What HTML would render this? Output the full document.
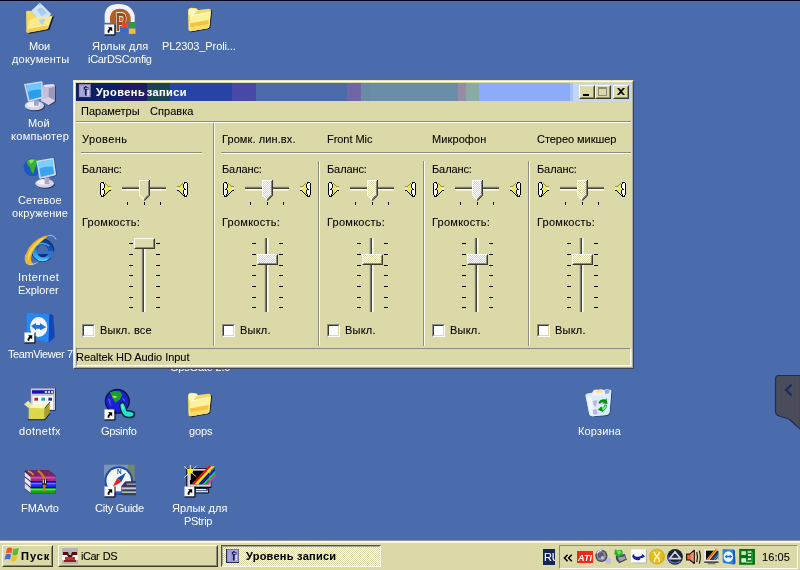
<!DOCTYPE html>
<html lang="ru">
<head>
<meta charset="utf-8">
<title>Уровень записи</title>
<style>
html,body{margin:0;padding:0;}
body{width:800px;height:570px;overflow:hidden;position:relative;background:#4a6cac;font-family:"Liberation Sans","DejaVu Sans",sans-serif;font-size:11px;line-height:13px;color:#000;}
div,span,svg{position:absolute;box-sizing:border-box;}
.t{white-space:nowrap;}
#topline{left:0;top:0;width:800px;height:3px;background:linear-gradient(#00001e 0,#00001e 1px,#5a6e9e 1px,#5a6e9e 2px,#506ca6 2px);}
/* window */
#win{left:73px;top:80px;width:561px;height:289px;background:#dbd9a8;}
#win .b1{left:0;top:0;width:561px;height:289px;border:1px solid;border-color:#e6e4c0 #3e4458 #3e4458 #e6e4c0;}
#win .b2{left:1px;top:1px;width:559px;height:287px;border:1px solid;border-color:#fffff4 #a8a89c #a8a89c #fffff4;}
#title{left:3px;top:3px;width:555px;height:18px;background:#0b1f5f;overflow:hidden;}
#title .band{top:0;height:18px;}
#ttext{left:20px;top:2px;color:#fff;font-weight:bold;line-height:14px;letter-spacing:0.45px;word-spacing:-2px;}
.cb{top:2px;width:16px;height:14px;background:#dbd9a8;border:1px solid;border-color:#fffff4 #3c3a28 #3c3a28 #fffff4;}
.cb i{position:absolute;left:0;top:0;right:0;bottom:0;border:1px solid;border-color:#dbd9a8 #8c8c82 #8c8c82 #dbd9a8;}
.hl{height:2px;border-top:1px solid #8c8c82;border-bottom:1px solid #fffff4;}
.vl{width:2px;border-left:1px solid #8c8c82;border-right:1px solid #fffff4;}
.chk{width:13px;height:13px;background:#fff;border:1px solid;border-color:#8c8c82 #fffff4 #fffff4 #8c8c82;}
.chk i{position:absolute;left:0;top:0;right:0;bottom:0;border:1px solid;border-color:#3c3a28 #dbd9a8 #dbd9a8 #3c3a28;}
/* taskbar */
#tb{left:0;top:540px;width:800px;height:30px;background:#dbd9a8;}
#tb .hi{left:0;top:1px;width:800px;height:1px;background:#fffff6;}
#tb .hi2{left:0;top:2px;width:800px;height:1px;background:#f4f3dc;}
#tb:before{content:"";position:absolute;left:0;top:0;width:800px;height:1px;background:#8a93a4;}
.btn{background:#dbd9a8;border:1px solid;border-color:#fffff4 #3c3a28 #3c3a28 #fffff4;}
.btn > i{position:absolute;left:0;top:0;right:0;bottom:0;border:1px solid;border-color:#dbd9a8 #8c8c82 #8c8c82 #dbd9a8;}
.btnp{background:conic-gradient(#fffffa 25%,#dbd9a8 0 50%,#fffffa 0 75%,#dbd9a8 0) 0 0/2px 2px;border:1px solid;border-color:#55544a #fffff4 #fffff4 #55544a;}
.btnp > i{position:absolute;left:0;top:0;right:0;bottom:0;border:1px solid;border-color:#a4a498 transparent transparent #a4a498;}
.trk{background:linear-gradient(#c9c7a0 0,#c9c7a0 1px,#7c7c74 1px,#7c7c74 2px,#44443c 2px,#44443c 3px,#fffff6 3px,#fffff6 4px,#efedcc 4px);}
.vtrk{background:linear-gradient(90deg,#c9c7a0 0,#c9c7a0 1px,#7c7c74 1px,#7c7c74 2px,#44443c 2px,#44443c 3px,#fffff6 3px,#fffff6 4px,#efedcc 4px);}
.tk{background:#000;}
.vth{background:#dddbae;border:1px solid;border-color:#fffff4 #3c3a28 #3c3a28 #fffff4;}
.vth i{position:absolute;left:0;top:0;right:0;bottom:0;border:1px solid;border-color:transparent #8c8c82 #8c8c82 transparent;}
.sb{border:1px solid;border-color:#8c8c82 #fffff4 #fffff4 #8c8c82;}
.lb{color:#fff;white-space:nowrap;line-height:13px;}
#root{left:0;top:0;width:800px;height:570px;overflow:hidden;will-change:transform;}
.t{-webkit-text-stroke:0.08px currentColor;}
.vth.dis{background:conic-gradient(#fff 25%,#dbd9a8 0 50%,#fff 0 75%,#dbd9a8 0) 0 0/2px 2px;}
#win .sb{box-shadow:1px 1px 0 #e8e6ca;}

</style>
</head>
<body>
<div id="root">
<div id="topline"></div>
<svg class="di" style="left:20px;top:0px;width:40px;height:38px" viewBox="0 0 40 38"><g transform="scale(0.066667)"><path d="M110 180L180 170L250 280L500 235L430 440L115 500Z" fill="#14140c" opacity="0.8" transform="translate(14,10)"/><path d="M92 176Q96 160 120 160L180 165L250 275L96 480Z" fill="#f4d860"/><path d="M290 48Q300 40 312 52L462 204Q468 214 458 226L340 380Q328 390 318 378L176 168Q170 158 180 150Z" fill="#cfe4f8"/><path d="M250 140L330 110L400 200L320 240Z" fill="#a8cdf2"/><circle cx="296" cy="72" r="10" fill="#7c9cd8"/><path d="M150 300Q250 240 300 260Q380 270 490 232L424 420Q418 436 400 438L112 492Q96 492 98 470Z" fill="#faea8c"/><path d="M285 300Q340 280 380 290L340 380Q300 350 285 300Z" fill="#a9d4f0"/><path d="M112 440L420 380L400 438L112 492Q96 492 98 470Z" fill="#f4cc4c"/></g></svg>
<span class="lb" style="left:29px;top:40px;letter-spacing:-0.2px">Мои</span>
<span class="lb" style="left:12px;top:53px;letter-spacing:0.2px">документы</span>
<svg class="di" style="left:100px;top:0px;width:40px;height:38px" viewBox="0 0 40 38"><g transform="scale(0.066667)"><path d="M70 340V230Q80 60 280 60Q470 60 520 230V330H430V250Q400 150 290 150Q180 150 160 250V340Z" fill="#f4f4f8"/><path d="M150 350V250Q170 130 300 130Q430 130 460 260V330H380V270Q360 200 300 200Q240 200 235 270V350Z" fill="#b06024"/><rect x="262" y="200" width="110" height="130" fill="#c86c34"/><text x="236" y="472" font-family="Liberation Sans, sans-serif" font-weight="bold" font-size="400" textLength="160" lengthAdjust="spacingAndGlyphs" fill="#9c4a20" stroke="#ece8d4" stroke-width="30" paint-order="stroke">P</text><rect x="330" y="335" width="95" height="85" fill="#e84a20"/><rect x="432" y="335" width="100" height="85" fill="#2c9c40"/><rect x="330" y="428" width="95" height="80" fill="#4068c8"/><rect x="432" y="428" width="100" height="80" fill="#f0c030"/></g><g transform="translate(4,24)"><rect x="0.5" y="0.5" width="10" height="10" fill="#fff"/><path d="M0.5 11H11V0.5" fill="none" stroke="#000" stroke-width="1"/><path d="M4 3.2H8.2V7.4L6.8 6C5.4 7 5.2 7.8 5.4 9L3.6 8.6C3.4 7 4 5.8 5.4 4.6Z" fill="#000"/></g></svg>
<span class="lb" style="left:92px;top:40px;letter-spacing:0.2px">Ярлык для</span>
<span class="lb" style="left:88px;top:53px;letter-spacing:-0.3px">iCarDSConfig</span>
<svg class="di" style="left:180px;top:0px;width:40px;height:38px" viewBox="0 0 40 38"><g transform="scale(0.066667)"><path d="M120 170Q120 120 170 118L240 122Q262 124 272 150L430 130Q462 128 466 160L440 400Q436 420 415 424L160 470Q128 474 126 440Z" fill="#10100c" opacity="0.8" transform="translate(16,12)"/><path d="M120 170Q120 120 170 118L240 122Q262 124 272 150L430 130Q462 128 466 160L440 400Q436 420 415 424L160 470Q128 474 126 440Z" fill="#f2da66"/><path d="M128 160Q132 128 170 126L236 130Q254 134 262 158L200 226L130 230Z" fill="#fbf7c0"/><path d="M150 240L430 188L432 400Q430 420 412 424L160 470Q140 470 138 440Z" fill="#fbf29c"/><path d="M150 348L432 300L432 365L152 412Z" fill="#f4c440"/><path d="M152 412L432 365L432 400Q430 420 412 424L160 470Q140 470 138 440Z" fill="#f8de68"/><path d="M434 186L462 172L440 400L432 405Z" fill="#fdf6b0"/><path d="M150 240L438 186" stroke="#fffde4" stroke-width="14" fill="none"/></g></svg>
<span class="lb" style="left:162px;top:40px;letter-spacing:-0.1px">PL2303_Proli...</span>
<svg class="di" style="left:20px;top:77px;width:40px;height:38px" viewBox="0 0 40 38"><g transform="scale(0.066667)"><ellipse cx="215" cy="430" rx="145" ry="70" fill="#182044" opacity="0.7" transform="translate(14,14)"/><path d="M350 120L500 110Q520 112 522 130L525 350Q522 370 505 378L430 420L310 360Z" fill="#182044" opacity="0.7" transform="translate(14,10)"/><path d="M350 120L500 110Q520 112 522 130L525 350Q522 370 505 378L430 420L310 360Z" fill="#c4c0dc"/><path d="M350 120L500 110L522 130L380 150Z" fill="#ece8f8"/><path d="M430 170L520 150L524 350L430 410Z" fill="#9c98b8"/><path d="M310 340L430 300L520 350L430 420Z" fill="#d8d0e8"/><ellipse cx="215" cy="430" rx="145" ry="70" fill="#d4d4e8"/><ellipse cx="200" cy="415" rx="100" ry="40" fill="#f0f0fa"/><path d="M210 350H280V430H210Z" fill="#a8a4c0"/><path d="M60 105L320 62Q336 62 338 78L350 300Q350 316 334 322L140 372Q122 374 118 358Z" fill="#c8d4ee"/><path d="M92 128L312 92L322 296L142 344Z" fill="#2c9cec"/><path d="M92 128L312 92L316 190Q200 180 110 230Z" fill="#6cc8f8"/></g></svg>
<span class="lb" style="left:28px;top:117px">Мой</span>
<span class="lb" style="left:11px;top:130px;letter-spacing:0.3px">компьютер</span>
<svg class="di" style="left:20px;top:154px;width:40px;height:38px" viewBox="0 0 40 38"><g transform="scale(0.066667)"><ellipse cx="370" cy="440" rx="140" ry="68" fill="#182044" opacity="0.7" transform="translate(14,14)"/><path d="M245 100L490 60Q508 60 510 78L540 300Q540 316 524 322L310 372Q292 374 288 358Z" fill="#182044" opacity="0.6" transform="translate(12,8)"/><circle cx="190" cy="200" r="135" fill="#1c58c0"/><path d="M100 110Q160 50 250 80Q270 150 230 200Q210 260 200 300Q150 250 150 200Q100 170 100 110Z" fill="#38b030"/><path d="M130 100Q170 70 210 90Q200 130 160 150Z" fill="#90e060"/><ellipse cx="370" cy="440" rx="140" ry="68" fill="#d4d4e8"/><ellipse cx="350" cy="425" rx="95" ry="38" fill="#f2f2fa"/><path d="M370 350H440V450H370Z" fill="#b0a4c0"/><path d="M245 100L490 60Q508 60 510 78L540 300Q540 316 524 322L310 372Q292 374 288 358Z" fill="#c8d8f0"/><path d="M272 122L484 88L512 296L312 344Z" fill="#38a4ec"/><path d="M272 122L484 88L496 190Q380 180 284 220Z" fill="#7cd0f8"/></g></svg>
<span class="lb" style="left:18px;top:194px;letter-spacing:0.15px">Сетевое</span>
<span class="lb" style="left:12px;top:207px;letter-spacing:0.2px">окружение</span>
<svg class="di" style="left:20px;top:231px;width:40px;height:38px" viewBox="0 0 40 38"><g transform="scale(0.066667)"><defs><linearGradient id="ieg" x1="0.7" y1="0" x2="0.3" y2="1"><stop offset="0" stop-color="#0c3a94"/><stop offset="0.45" stop-color="#1a66c8"/><stop offset="1" stop-color="#3cb4f4"/></linearGradient></defs><circle cx="340" cy="290" r="128" fill="none" stroke="#0a2c78" stroke-width="92"/><circle cx="340" cy="290" r="124" fill="none" stroke="url(#ieg)" stroke-width="76"/><path d="M250 215Q340 150 440 225" stroke="#48b8d8" stroke-width="26" fill="none" opacity="0.8"/><path d="M262 345H430Q400 392 345 392Q290 392 262 345Z" fill="#10307c"/><path d="M252 302H506V346H252Z" fill="#2a74d4"/><path d="M420 347H512Q510 380 492 410L430 380Q440 365 420 347Z" fill="#4a6cac"/><path d="M270 425Q340 455 410 420" stroke="#58ccf8" stroke-width="26" fill="none"/><path d="M430 62Q260 80 135 250Q50 390 100 492Q140 528 210 490Q150 470 170 380Q200 250 330 150Q400 100 430 62Z" fill="#f2b422"/><path d="M330 110Q200 190 130 330Q110 400 120 450Q150 330 230 230Q290 160 370 105Z" fill="#f8dc6c" opacity="0.85"/><path d="M100 492Q60 420 90 350" stroke="#b8d4a0" stroke-width="16" fill="none" opacity="0.8"/><path d="M425 66Q520 60 540 128" stroke="#c4d4ec" stroke-width="14" fill="none" opacity="0.9"/><path d="M130 505Q190 520 262 470" stroke="#c8d8e0" stroke-width="14" fill="none" opacity="0.9"/></g></svg>
<span class="lb" style="left:18px;top:271px;letter-spacing:0.5px">Internet</span>
<span class="lb" style="left:18px;top:284px;letter-spacing:-0.05px">Explorer</span>
<svg class="di" style="left:20px;top:308px;width:40px;height:38px" viewBox="0 0 40 38"><g transform="scale(0.066667)"><path d="M95 70L440 90L500 110L520 440L430 520L100 440Z" fill="#1c60d8"/><path d="M95 70L440 90L430 520L100 440Z" fill="#2888f0"/><path d="M440 90L500 110L520 440L430 520Z" fill="#1444b8"/><ellipse cx="280" cy="285" rx="130" ry="150" fill="#f4f4fc"/><path d="M165 270L240 225V255H300V225L395 290L300 335V310H240V335Z" fill="#2070e0"/></g><g transform="translate(4,24)"><rect x="0.5" y="0.5" width="10" height="10" fill="#fff"/><path d="M0.5 11H11V0.5" fill="none" stroke="#000" stroke-width="1"/><path d="M4 3.2H8.2V7.4L6.8 6C5.4 7 5.2 7.8 5.4 9L3.6 8.6C3.4 7 4 5.8 5.4 4.6Z" fill="#000"/></g></svg>
<span class="lb" style="left:8px;top:348px;letter-spacing:-0.4px">TeamViewer 7</span>
<svg class="di" style="left:20px;top:385px;width:40px;height:38px" viewBox="0 0 40 38"><g transform="scale(0.066667)"><path d="M160 50H535V385H160Z" fill="#1c1c50"/><path d="M160 50H525V375H160Z" fill="#c8c8d4"/><path d="M180 78H505V130H180Z" fill="#1414a8"/><rect x="372" y="90" width="32" height="30" fill="#d8d8e0"/><rect x="418" y="90" width="32" height="30" fill="#d8d8e0"/><rect x="464" y="90" width="32" height="30" fill="#d8d8e0"/><path d="M190 165H495V365H190Z" fill="#fcfcfc"/><path d="M215 190H270V235H215Z" fill="#c02020"/><path d="M320 190H375V235H320Z" fill="#20a0b8"/><path d="M425 190H480V235H425Z" fill="#2030a0"/><path d="M130 340L370 350V520H130Z" fill="#dcd84c"/><path d="M370 350L445 260V420L370 520Z" fill="#a8a020"/><path d="M130 340L190 290L445 260L370 350Z" fill="#fcf8c0"/><path d="M60 290L125 235L185 295L130 345Z" fill="#e8e8a0"/><path d="M120 520H375L450 425" stroke="#000" stroke-width="12" fill="none"/><path d="M370 350L450 255" stroke="#000" stroke-width="10" fill="none"/></g></svg>
<span class="lb" style="left:19px;top:425px;letter-spacing:0.35px">dotnetfx</span>
<svg class="di" style="left:100px;top:385px;width:40px;height:38px" viewBox="0 0 40 38"><g transform="scale(0.066667)"><circle cx="260" cy="245" r="188" fill="#0a1048"/><circle cx="260" cy="245" r="168" fill="#1c20d4"/><path d="M120 200Q130 300 200 350Q150 300 160 220Z" fill="#5868e8" opacity="0.7"/><path d="M330 190Q370 200 380 250Q350 240 330 190Z" fill="#6878f0" opacity="0.8"/><path d="M150 110Q220 76 300 96L335 150L300 215L230 265L190 200Z" fill="#1c9c2c"/><path d="M180 165Q225 150 260 180L215 200Z" fill="#98f060"/><path d="M285 290Q325 225 375 270Q400 330 410 375Q470 372 520 400Q545 450 500 490Q420 515 360 480Q295 425 285 290Z" fill="#06283c"/><path d="M305 300Q332 255 360 290Q380 345 392 395Q450 398 500 420Q512 450 480 470Q425 488 375 460Q318 415 305 300Z" fill="#20e4d0"/><path d="M320 310Q335 290 350 310Q360 350 365 380Q340 360 320 310Z" fill="#70fff0" opacity="0.7"/></g><g transform="translate(4,24)"><rect x="0.5" y="0.5" width="10" height="10" fill="#fff"/><path d="M0.5 11H11V0.5" fill="none" stroke="#000" stroke-width="1"/><path d="M4 3.2H8.2V7.4L6.8 6C5.4 7 5.2 7.8 5.4 9L3.6 8.6C3.4 7 4 5.8 5.4 4.6Z" fill="#000"/></g></svg>
<span class="lb" style="left:101px;top:425px;letter-spacing:-0.35px">Gpsinfo</span>
<svg class="di" style="left:180px;top:385px;width:40px;height:38px" viewBox="0 0 40 38"><g transform="scale(0.066667)"><path d="M120 170Q120 120 170 118L240 122Q262 124 272 150L430 130Q462 128 466 160L440 400Q436 420 415 424L160 470Q128 474 126 440Z" fill="#10100c" opacity="0.8" transform="translate(16,12)"/><path d="M120 170Q120 120 170 118L240 122Q262 124 272 150L430 130Q462 128 466 160L440 400Q436 420 415 424L160 470Q128 474 126 440Z" fill="#f2da66"/><path d="M128 160Q132 128 170 126L236 130Q254 134 262 158L200 226L130 230Z" fill="#fbf7c0"/><path d="M150 240L430 188L432 400Q430 420 412 424L160 470Q140 470 138 440Z" fill="#fbf29c"/><path d="M150 348L432 300L432 365L152 412Z" fill="#f4c440"/><path d="M152 412L432 365L432 400Q430 420 412 424L160 470Q140 470 138 440Z" fill="#f8de68"/><path d="M434 186L462 172L440 400L432 405Z" fill="#fdf6b0"/><path d="M150 240L438 186" stroke="#fffde4" stroke-width="14" fill="none"/></g></svg>
<span class="lb" style="left:189px;top:425px;letter-spacing:-0.15px">gops</span>
<svg class="di" style="left:20px;top:462px;width:40px;height:38px" viewBox="0 0 40 38"><g transform="scale(0.066667)"><path d="M70 130L430 125L535 210V470H155L70 400Z" fill="#101038"/><path d="M70 130L430 125L535 215H160Z" fill="#7e2460"/><path d="M160 215H535V285H160Z" fill="#d248a8"/><path d="M160 250H535V285H160Z" fill="#a02880"/><path d="M160 300H535V375H160Z" fill="#2828d8"/><path d="M160 315H535V335H160Z" fill="#6080f8"/><path d="M160 390H535V465H160Z" fill="#18a018"/><path d="M160 405H535V425H160Z" fill="#60e060"/><path d="M70 145L160 225V285L70 215Z" fill="#e8e0f0"/><path d="M70 230L160 300V375L70 300Z" fill="#e8e4f8"/><path d="M70 315L160 390V465L70 395Z" fill="#e0e0e8"/><path d="M120 135Q170 150 200 195" stroke="#d89030" stroke-width="24" fill="none"/><path d="M270 130Q330 170 365 240V440" stroke="#c88020" stroke-width="34" fill="none"/><rect x="330" y="255" width="70" height="85" fill="#181818"/><rect x="340" y="260" width="16" height="60" fill="#f4f4f4"/><rect x="374" y="260" width="16" height="60" fill="#f4f4f4"/></g></svg>
<span class="lb" style="left:21px;top:502px;letter-spacing:0.05px">FMAvto</span>
<svg class="di" style="left:100px;top:462px;width:40px;height:38px" viewBox="0 0 40 38"><g transform="scale(0.066667)"><path d="M60 40H420V330H60Z" fill="#90a4c4" opacity="0.7"/><path d="M420 40H520V280H420Z" fill="#7c9058" opacity="0.8"/><circle cx="280" cy="280" r="215" fill="#1c4c9c"/><circle cx="280" cy="280" r="185" fill="#f4f6fc"/><text x="289" y="182" font-family="Liberation Sans, sans-serif" font-weight="bold" font-size="96" text-anchor="middle" fill="#1c5c7c">N</text><path d="M390 160L320 300L260 240Z" fill="#1c4cb0"/><path d="M260 240L320 300L190 370Z" fill="#e82010"/><path d="M230 440H320V480H230Z" fill="#2c5cc0"/><path d="M380 290H540V500H320V360Z" fill="#3c3c58"/><path d="M330 380H540V410H330Z" fill="#c8c8d8"/><path d="M330 440H540V465H330Z" fill="#a8c8a8"/><path d="M400 320H540V345H400Z" fill="#8890b0"/></g><g transform="translate(4,24)"><rect x="0.5" y="0.5" width="10" height="10" fill="#fff"/><path d="M0.5 11H11V0.5" fill="none" stroke="#000" stroke-width="1"/><path d="M4 3.2H8.2V7.4L6.8 6C5.4 7 5.2 7.8 5.4 9L3.6 8.6C3.4 7 4 5.8 5.4 4.6Z" fill="#000"/></g></svg>
<span class="lb" style="left:95px;top:502px;letter-spacing:-0.25px">City Guide</span>
<svg class="di" style="left:180px;top:462px;width:40px;height:38px" viewBox="0 0 40 38"><g transform="scale(0.066667)"><path d="M95 95H470V390H95Z" fill="#000"/><path d="M110 105H460V370H110Z" fill="#d8d0d8"/><path d="M150 130H440V335H150Z" fill="#000"/><path d="M440 55L525 60V160L330 335H150Z" fill="#000" opacity="0"/><path d="M430 60L470 62L215 335H170Z" fill="#e81010"/><path d="M470 62L520 64L275 335H215Z" fill="#f8e020"/><path d="M525 90V130L330 335H280Z" fill="#1020c0"/><path d="M530 135V175L380 335H335Z" fill="#20d040"/><path d="M535 180V220L425 335H385Z" fill="#e030e0"/><path d="M230 405H390V420H230Z" fill="#fff"/><path d="M230 438H420V455H230Z" fill="#fff"/><path d="M225 395H430V465H225Z" fill="none" stroke="#000" stroke-width="12"/><path d="M155 45V270M60 65L245 220M245 60L65 235" stroke="#fffcc0" stroke-width="12" fill="none"/><circle cx="155" cy="135" r="40" fill="#fcf010"/></g><g transform="translate(4,24)"><rect x="0.5" y="0.5" width="10" height="10" fill="#fff"/><path d="M0.5 11H11V0.5" fill="none" stroke="#000" stroke-width="1"/><path d="M4 3.2H8.2V7.4L6.8 6C5.4 7 5.2 7.8 5.4 9L3.6 8.6C3.4 7 4 5.8 5.4 4.6Z" fill="#000"/></g></svg>
<span class="lb" style="left:172px;top:502px;letter-spacing:0.1px">Ярлык для</span>
<span class="lb" style="left:184px;top:515px;letter-spacing:-0.3px">PStrip</span>
<svg class="di" style="left:580px;top:385px;width:40px;height:38px" viewBox="0 0 40 38"><g transform="scale(0.066667)"><path d="M100 140L470 80L440 400Q430 450 380 460L190 470Q150 465 140 430Z" fill="#182450" opacity="0.6" transform="translate(16,8)"/><path d="M80 150Q90 130 130 125L440 70Q470 68 472 90L445 400Q440 440 400 450L190 470Q150 468 140 440Z" fill="#dcecfa"/><path d="M180 120Q200 62 260 70Q330 50 360 80Q400 50 450 80L440 150L190 170Z" fill="#f2eef8"/><path d="M240 90Q280 66 340 84L330 112L250 118Z" fill="#f8e860"/><path d="M370 80Q410 58 445 84L436 135L380 135Z" fill="#80a8f0"/><path d="M86 160Q200 200 462 112L445 400Q440 440 400 450L190 470Q150 468 140 440Z" fill="#d8eefc" opacity="0.92"/><path d="M100 170L150 440Q160 465 190 468L230 466L170 185Z" fill="#f4fafe" opacity="0.8"/><path d="M190 240L260 226L240 330L200 300Z" fill="#c8b0d8"/><path d="M190 370L250 360L262 440L200 442Z" fill="#c0b0f0"/><path d="M275 265Q310 200 385 218L395 195L415 285L330 275L355 255Q320 250 300 285Z" fill="#0c8c14"/><path d="M405 300Q405 360 345 392L352 410L268 372L322 318L328 342Q365 330 372 292Z" fill="#0c8c14"/><path d="M332 345Q372 332 390 300L402 318Q382 362 342 382Z" fill="#7cf07c"/></g></svg>
<span class="lb" style="left:578px;top:425px;letter-spacing:0.15px">Корзина</span>
<span class="lb" style="left:170px;top:361px;letter-spacing:-0.2px">GpsGate 2.0</span>
<svg style="left:772px;top:372px;width:28px;height:62px" viewBox="0 0 28 62"><path d="M28.5 3.5H7Q3.5 3.5 3.5 7V39Q3.5 43 7 44L17 47L28.5 57.5Z" fill="#4a4b5b" stroke="#1e2c5c" stroke-width="1.2"/><path d="M19.5 12.5L14 18L19.5 23.5" fill="none" stroke="#1a2a5c" stroke-width="2.2"/></svg>
<div id="win">
<div class="b1"></div><div class="b2"></div>
<svg style="left:0;top:0;width:0;height:0"><defs><pattern id="dth" width="2" height="2" patternUnits="userSpaceOnUse"><rect width="2" height="2" fill="#dbd9a8"/><rect width="1" height="1" fill="#fff"/><rect x="1" y="1" width="1" height="1" fill="#fff"/></pattern></defs></svg>
<div id="title">
<div class="band" style="left:0px;width:44px;background:#0a1f66"></div>
<div class="band" style="left:44px;width:27px;background:#1f1b64"></div>
<div class="band" style="left:71px;width:23px;background:#1c4450"></div>
<div class="band" style="left:94px;width:62px;background:#2743a6"></div>
<div class="band" style="left:156px;width:24px;background:#4848a6"></div>
<div class="band" style="left:180px;width:91px;background:#4a6aa8"></div>
<div class="band" style="left:271px;width:14px;background:#7066a6"></div>
<div class="band" style="left:285px;width:9px;background:#6a8aa8"></div>
<div class="band" style="left:294px;width:88px;background:#6a8ea6"></div>
<div class="band" style="left:382px;width:8px;background:#9a8aa8"></div>
<div class="band" style="left:390px;width:13px;background:#8aaaa6"></div>
<div class="band" style="left:403px;width:91px;background:#8cacfa"></div>
<div class="band" style="left:494px;width:3px;background:#a4c2f8"></div>
<div class="band" style="left:497px;width:59px;background:#c4d6f0"></div>
<svg id="ticon" style="left:2px;top:1px;width:13px;height:14px" viewBox="0 0 12 14" preserveAspectRatio="none"><rect width="12" height="14" fill="#a6a6de"/><rect x="1" y="1" width="5" height="12" fill="#9c9cd2"/><rect x="0" y="0" width="12" height="1" fill="#7c7cac"/><rect x="11" y="0" width="1" height="14" fill="#6c6c94"/><rect x="0" y="0" width="1" height="14" fill="#2a2a52"/><rect x="0" y="13" width="12" height="1" fill="#2a2a52"/><path d="M2.5 3H4M2.5 5H4M2.5 7H4M2.5 9H4M2.5 11H4" stroke="#e8e8ff" stroke-width="0.8" opacity="0.6"/><rect x="6.4" y="2" width="1.6" height="9.6" fill="#1a1a5a"/><rect x="5.4" y="3" width="4.2" height="2.6" fill="#1a1a5a"/><rect x="6.6" y="3.8" width="2.6" height="0.9" fill="#e4e4ff"/><path d="M8.6 7H10.2M8.6 8.8H10.2M8.6 10.6H10.2" stroke="#f4f4ff" stroke-width="0.9"/></svg>
<span id="ttext" class="t">Уровень записи</span>
<div class="cb" style="left:503px"><i></i><svg style="left:3px;top:8px;width:6px;height:2px" viewBox="0 0 6 2"><rect width="6" height="2" fill="#000"/></svg></div>
<div class="cb" style="left:519px"><i></i><svg style="left:2px;top:1px;width:9px;height:9px" viewBox="0 0 9 9"><rect x="0.5" y="1" width="8" height="7.5" fill="none" stroke="#8c8c82"/><rect x="0" y="0" width="9" height="2" fill="#8c8c82"/></svg></div>
<div class="cb" style="left:537px"><i></i><svg style="left:3px;top:2px;width:8px;height:7px" viewBox="0 0 8 7"><path d="M0 0h2l2 2 2-2h2L5 3.5 8 7H6L4 5 2 7H0l3-3.5z" fill="#000"/></svg></div>
</div>
<span class="t" style="left:8px;top:25px">Параметры</span>
<span class="t" style="left:77px;top:25px;letter-spacing:0.05px">Справка</span>
<div class="hl" style="left:3px;top:41px;width:555px"></div>
<div class="hl" style="left:8px;top:72px;width:121px"></div>
<div class="hl" style="left:148px;top:72px;width:410px"></div>
<div class="vl" style="left:140px;top:43px;height:223px"></div>
<div class="vl" style="left:245px;top:81px;height:185px"></div>
<div class="vl" style="left:350px;top:81px;height:185px"></div>
<div class="vl" style="left:455px;top:81px;height:185px"></div>
<span class="t" style="left:9px;top:53px;letter-spacing:0.45px">Уровень</span>
<span class="t" style="left:9px;top:83px;letter-spacing:-0.1px">Баланс:</span>
<svg class="spk" style="left:26px;top:101px;width:13px;height:17px" viewBox="0 0 13 17"><g shape-rendering="crispEdges"><path d="M2 2H5V15H2Z" fill="#fff"/><path d="M5 2L10 6H12V10H10L5 15Z" fill="#ecea60"/><path d="M10 6H12V9H10Z" fill="#f4f2a0"/><path d="M6 2H7V3H6ZM7 3H8V4H7ZM8 4H9V5H8ZM9 5H12V6H9Z" fill="#8e8c34"/><path d="M2 1H5V2H2ZM1 2H2V14H1ZM2 14H3V15H2ZM2 15H5V16H2ZM4 2H5V3H4ZM5 3H6V7H5ZM4 7H5V9H4ZM3 8H4V9H3ZM5 9H6V13H5ZM4 13H5V15H4Z" fill="#000"/><path d="M5 14H6V15H5ZM6 13H7V14H6ZM7 12H8V13H7ZM8 11H9V12H8ZM9 10H10V11H9ZM10 9H12V10H10Z" fill="#000"/></g></svg>
<svg class="spk" style="left:103px;top:101px;width:13px;height:17px" viewBox="0 0 13 17"><g transform="translate(13,0) scale(-1,1)"><g shape-rendering="crispEdges"><path d="M2 2H5V15H2Z" fill="#fff"/><path d="M5 2L10 6H12V10H10L5 15Z" fill="#ecea60"/><path d="M10 6H12V9H10Z" fill="#f4f2a0"/><path d="M6 2H7V3H6ZM7 3H8V4H7ZM8 4H9V5H8ZM9 5H12V6H9Z" fill="#8e8c34"/><path d="M2 1H5V2H2ZM1 2H2V14H1ZM2 14H3V15H2ZM2 15H5V16H2ZM4 2H5V3H4ZM5 3H6V7H5ZM4 7H5V9H4ZM3 8H4V9H3ZM5 9H6V13H5ZM4 13H5V15H4Z" fill="#000"/><path d="M5 14H6V15H5ZM6 13H7V14H6ZM7 12H8V13H7ZM8 11H9V12H8ZM9 10H10V11H9ZM10 9H12V10H10Z" fill="#000"/></g></g></svg>
<div class="trk" style="left:49px;top:106px;width:44px;height:5px"></div>
<svg style="left:66px;top:100px;width:11px;height:21px" viewBox="0 0 11 21"><path d="M0 0H11V15.2L5.5 20.7L0 15.2Z" fill="#fffff4"/><path d="M1 1H10V14.8L5.5 19.3L1 14.8Z" fill="#dddbae"/><path d="M9.5 1V14.6L5.5 18.6" fill="none" stroke="#8c8c82" stroke-width="1"/><path d="M10.5 0V15.2L5.2 20.5" fill="none" stroke="#38382c" stroke-width="1.1"/></svg>
<div class="tk" style="left:54px;top:122px;width:1px;height:3px"></div>
<div class="tk" style="left:71px;top:122px;width:1px;height:3px"></div>
<div class="tk" style="left:87px;top:122px;width:1px;height:3px"></div>
<span class="t" style="left:9px;top:136px;letter-spacing:0.25px">Громкость:</span>
<div class="vtrk" style="left:68px;top:158px;width:5px;height:74px"></div>
<div class="tk" style="left:56px;top:163px;width:4px;height:1px"></div>
<div class="tk" style="left:83px;top:163px;width:4px;height:1px"></div>
<div class="tk" style="left:56px;top:174px;width:4px;height:1px"></div>
<div class="tk" style="left:83px;top:174px;width:4px;height:1px"></div>
<div class="tk" style="left:56px;top:185px;width:4px;height:1px"></div>
<div class="tk" style="left:83px;top:185px;width:4px;height:1px"></div>
<div class="tk" style="left:56px;top:195px;width:4px;height:1px"></div>
<div class="tk" style="left:83px;top:195px;width:4px;height:1px"></div>
<div class="tk" style="left:56px;top:206px;width:4px;height:1px"></div>
<div class="tk" style="left:83px;top:206px;width:4px;height:1px"></div>
<div class="tk" style="left:56px;top:217px;width:4px;height:1px"></div>
<div class="tk" style="left:83px;top:217px;width:4px;height:1px"></div>
<div class="tk" style="left:56px;top:227px;width:4px;height:1px"></div>
<div class="tk" style="left:83px;top:227px;width:4px;height:1px"></div>
<div class="vth" style="left:61px;top:158px;width:21px;height:11px"><i></i></div>
<div class="chk" style="left:9px;top:244px"><i></i></div>
<span class="t" style="left:27px;top:244px;letter-spacing:0.2px">Выкл. все</span>
<span class="t" style="left:149px;top:53px;letter-spacing:0.1px">Громк. лин.вх.</span>
<span class="t" style="left:149px;top:83px;letter-spacing:-0.1px">Баланс:</span>
<svg class="spk" style="left:149px;top:101px;width:13px;height:17px" viewBox="0 0 13 17"><g shape-rendering="crispEdges"><path d="M2 2H5V15H2Z" fill="#fff"/><path d="M5 2L10 6H12V10H10L5 15Z" fill="#ecea60"/><path d="M10 6H12V9H10Z" fill="#f4f2a0"/><path d="M6 2H7V3H6ZM7 3H8V4H7ZM8 4H9V5H8ZM9 5H12V6H9Z" fill="#8e8c34"/><path d="M2 1H5V2H2ZM1 2H2V14H1ZM2 14H3V15H2ZM2 15H5V16H2ZM4 2H5V3H4ZM5 3H6V7H5ZM4 7H5V9H4ZM3 8H4V9H3ZM5 9H6V13H5ZM4 13H5V15H4Z" fill="#000"/><path d="M5 14H6V15H5ZM6 13H7V14H6ZM7 12H8V13H7ZM8 11H9V12H8ZM9 10H10V11H9ZM10 9H12V10H10Z" fill="#000"/></g></svg>
<svg class="spk" style="left:226px;top:101px;width:13px;height:17px" viewBox="0 0 13 17"><g transform="translate(13,0) scale(-1,1)"><g shape-rendering="crispEdges"><path d="M2 2H5V15H2Z" fill="#fff"/><path d="M5 2L10 6H12V10H10L5 15Z" fill="#ecea60"/><path d="M10 6H12V9H10Z" fill="#f4f2a0"/><path d="M6 2H7V3H6ZM7 3H8V4H7ZM8 4H9V5H8ZM9 5H12V6H9Z" fill="#8e8c34"/><path d="M2 1H5V2H2ZM1 2H2V14H1ZM2 14H3V15H2ZM2 15H5V16H2ZM4 2H5V3H4ZM5 3H6V7H5ZM4 7H5V9H4ZM3 8H4V9H3ZM5 9H6V13H5ZM4 13H5V15H4Z" fill="#000"/><path d="M5 14H6V15H5ZM6 13H7V14H6ZM7 12H8V13H7ZM8 11H9V12H8ZM9 10H10V11H9ZM10 9H12V10H10Z" fill="#000"/></g></g></svg>
<div class="trk" style="left:172px;top:106px;width:44px;height:5px"></div>
<svg style="left:189px;top:100px;width:11px;height:21px" viewBox="0 0 11 21"><path d="M0 0H11V15.2L5.5 20.7L0 15.2Z" fill="#fffff4"/><path d="M1 1H10V14.8L5.5 19.3L1 14.8Z" fill="url(#dth)"/><path d="M9.5 1V14.6L5.5 18.6" fill="none" stroke="#8c8c82" stroke-width="1"/><path d="M10.5 0V15.2L5.2 20.5" fill="none" stroke="#38382c" stroke-width="1.1"/></svg>
<div class="tk" style="left:177px;top:122px;width:1px;height:3px"></div>
<div class="tk" style="left:194px;top:122px;width:1px;height:3px"></div>
<div class="tk" style="left:210px;top:122px;width:1px;height:3px"></div>
<span class="t" style="left:149px;top:136px;letter-spacing:0.25px">Громкость:</span>
<div class="vtrk" style="left:191px;top:158px;width:5px;height:74px"></div>
<div class="tk" style="left:179px;top:163px;width:4px;height:1px"></div>
<div class="tk" style="left:206px;top:163px;width:4px;height:1px"></div>
<div class="tk" style="left:179px;top:174px;width:4px;height:1px"></div>
<div class="tk" style="left:206px;top:174px;width:4px;height:1px"></div>
<div class="tk" style="left:179px;top:185px;width:4px;height:1px"></div>
<div class="tk" style="left:206px;top:185px;width:4px;height:1px"></div>
<div class="tk" style="left:179px;top:195px;width:4px;height:1px"></div>
<div class="tk" style="left:206px;top:195px;width:4px;height:1px"></div>
<div class="tk" style="left:179px;top:206px;width:4px;height:1px"></div>
<div class="tk" style="left:206px;top:206px;width:4px;height:1px"></div>
<div class="tk" style="left:179px;top:217px;width:4px;height:1px"></div>
<div class="tk" style="left:206px;top:217px;width:4px;height:1px"></div>
<div class="tk" style="left:179px;top:227px;width:4px;height:1px"></div>
<div class="tk" style="left:206px;top:227px;width:4px;height:1px"></div>
<div class="vth dis" style="left:184px;top:174px;width:21px;height:11px"><i></i></div>
<div class="chk" style="left:149px;top:244px"><i></i></div>
<span class="t" style="left:167px;top:244px;letter-spacing:0.2px">Выкл.</span>
<span class="t" style="left:254px;top:53px;letter-spacing:-0.05px">Front Mic</span>
<span class="t" style="left:254px;top:83px;letter-spacing:-0.1px">Баланс:</span>
<svg class="spk" style="left:254px;top:101px;width:13px;height:17px" viewBox="0 0 13 17"><g shape-rendering="crispEdges"><path d="M2 2H5V15H2Z" fill="#fff"/><path d="M5 2L10 6H12V10H10L5 15Z" fill="#ecea60"/><path d="M10 6H12V9H10Z" fill="#f4f2a0"/><path d="M6 2H7V3H6ZM7 3H8V4H7ZM8 4H9V5H8ZM9 5H12V6H9Z" fill="#8e8c34"/><path d="M2 1H5V2H2ZM1 2H2V14H1ZM2 14H3V15H2ZM2 15H5V16H2ZM4 2H5V3H4ZM5 3H6V7H5ZM4 7H5V9H4ZM3 8H4V9H3ZM5 9H6V13H5ZM4 13H5V15H4Z" fill="#000"/><path d="M5 14H6V15H5ZM6 13H7V14H6ZM7 12H8V13H7ZM8 11H9V12H8ZM9 10H10V11H9ZM10 9H12V10H10Z" fill="#000"/></g></svg>
<svg class="spk" style="left:331px;top:101px;width:13px;height:17px" viewBox="0 0 13 17"><g transform="translate(13,0) scale(-1,1)"><g shape-rendering="crispEdges"><path d="M2 2H5V15H2Z" fill="#fff"/><path d="M5 2L10 6H12V10H10L5 15Z" fill="#ecea60"/><path d="M10 6H12V9H10Z" fill="#f4f2a0"/><path d="M6 2H7V3H6ZM7 3H8V4H7ZM8 4H9V5H8ZM9 5H12V6H9Z" fill="#8e8c34"/><path d="M2 1H5V2H2ZM1 2H2V14H1ZM2 14H3V15H2ZM2 15H5V16H2ZM4 2H5V3H4ZM5 3H6V7H5ZM4 7H5V9H4ZM3 8H4V9H3ZM5 9H6V13H5ZM4 13H5V15H4Z" fill="#000"/><path d="M5 14H6V15H5ZM6 13H7V14H6ZM7 12H8V13H7ZM8 11H9V12H8ZM9 10H10V11H9ZM10 9H12V10H10Z" fill="#000"/></g></g></svg>
<div class="trk" style="left:277px;top:106px;width:44px;height:5px"></div>
<svg style="left:294px;top:100px;width:11px;height:21px" viewBox="0 0 11 21"><path d="M0 0H11V15.2L5.5 20.7L0 15.2Z" fill="#fffff4"/><path d="M1 1H10V14.8L5.5 19.3L1 14.8Z" fill="url(#dth)"/><path d="M9.5 1V14.6L5.5 18.6" fill="none" stroke="#8c8c82" stroke-width="1"/><path d="M10.5 0V15.2L5.2 20.5" fill="none" stroke="#38382c" stroke-width="1.1"/></svg>
<div class="tk" style="left:282px;top:122px;width:1px;height:3px"></div>
<div class="tk" style="left:299px;top:122px;width:1px;height:3px"></div>
<div class="tk" style="left:315px;top:122px;width:1px;height:3px"></div>
<span class="t" style="left:254px;top:136px;letter-spacing:0.25px">Громкость:</span>
<div class="vtrk" style="left:296px;top:158px;width:5px;height:74px"></div>
<div class="tk" style="left:284px;top:163px;width:4px;height:1px"></div>
<div class="tk" style="left:311px;top:163px;width:4px;height:1px"></div>
<div class="tk" style="left:284px;top:174px;width:4px;height:1px"></div>
<div class="tk" style="left:311px;top:174px;width:4px;height:1px"></div>
<div class="tk" style="left:284px;top:185px;width:4px;height:1px"></div>
<div class="tk" style="left:311px;top:185px;width:4px;height:1px"></div>
<div class="tk" style="left:284px;top:195px;width:4px;height:1px"></div>
<div class="tk" style="left:311px;top:195px;width:4px;height:1px"></div>
<div class="tk" style="left:284px;top:206px;width:4px;height:1px"></div>
<div class="tk" style="left:311px;top:206px;width:4px;height:1px"></div>
<div class="tk" style="left:284px;top:217px;width:4px;height:1px"></div>
<div class="tk" style="left:311px;top:217px;width:4px;height:1px"></div>
<div class="tk" style="left:284px;top:227px;width:4px;height:1px"></div>
<div class="tk" style="left:311px;top:227px;width:4px;height:1px"></div>
<div class="vth dis" style="left:289px;top:174px;width:21px;height:11px"><i></i></div>
<div class="chk" style="left:254px;top:244px"><i></i></div>
<span class="t" style="left:272px;top:244px;letter-spacing:0.2px">Выкл.</span>
<span class="t" style="left:359px;top:53px;letter-spacing:0.1px">Микрофон</span>
<span class="t" style="left:359px;top:83px;letter-spacing:-0.1px">Баланс:</span>
<svg class="spk" style="left:359px;top:101px;width:13px;height:17px" viewBox="0 0 13 17"><g shape-rendering="crispEdges"><path d="M2 2H5V15H2Z" fill="#fff"/><path d="M5 2L10 6H12V10H10L5 15Z" fill="#ecea60"/><path d="M10 6H12V9H10Z" fill="#f4f2a0"/><path d="M6 2H7V3H6ZM7 3H8V4H7ZM8 4H9V5H8ZM9 5H12V6H9Z" fill="#8e8c34"/><path d="M2 1H5V2H2ZM1 2H2V14H1ZM2 14H3V15H2ZM2 15H5V16H2ZM4 2H5V3H4ZM5 3H6V7H5ZM4 7H5V9H4ZM3 8H4V9H3ZM5 9H6V13H5ZM4 13H5V15H4Z" fill="#000"/><path d="M5 14H6V15H5ZM6 13H7V14H6ZM7 12H8V13H7ZM8 11H9V12H8ZM9 10H10V11H9ZM10 9H12V10H10Z" fill="#000"/></g></svg>
<svg class="spk" style="left:436px;top:101px;width:13px;height:17px" viewBox="0 0 13 17"><g transform="translate(13,0) scale(-1,1)"><g shape-rendering="crispEdges"><path d="M2 2H5V15H2Z" fill="#fff"/><path d="M5 2L10 6H12V10H10L5 15Z" fill="#ecea60"/><path d="M10 6H12V9H10Z" fill="#f4f2a0"/><path d="M6 2H7V3H6ZM7 3H8V4H7ZM8 4H9V5H8ZM9 5H12V6H9Z" fill="#8e8c34"/><path d="M2 1H5V2H2ZM1 2H2V14H1ZM2 14H3V15H2ZM2 15H5V16H2ZM4 2H5V3H4ZM5 3H6V7H5ZM4 7H5V9H4ZM3 8H4V9H3ZM5 9H6V13H5ZM4 13H5V15H4Z" fill="#000"/><path d="M5 14H6V15H5ZM6 13H7V14H6ZM7 12H8V13H7ZM8 11H9V12H8ZM9 10H10V11H9ZM10 9H12V10H10Z" fill="#000"/></g></g></svg>
<div class="trk" style="left:382px;top:106px;width:44px;height:5px"></div>
<svg style="left:399px;top:100px;width:11px;height:21px" viewBox="0 0 11 21"><path d="M0 0H11V15.2L5.5 20.7L0 15.2Z" fill="#fffff4"/><path d="M1 1H10V14.8L5.5 19.3L1 14.8Z" fill="url(#dth)"/><path d="M9.5 1V14.6L5.5 18.6" fill="none" stroke="#8c8c82" stroke-width="1"/><path d="M10.5 0V15.2L5.2 20.5" fill="none" stroke="#38382c" stroke-width="1.1"/></svg>
<div class="tk" style="left:387px;top:122px;width:1px;height:3px"></div>
<div class="tk" style="left:404px;top:122px;width:1px;height:3px"></div>
<div class="tk" style="left:420px;top:122px;width:1px;height:3px"></div>
<span class="t" style="left:359px;top:136px;letter-spacing:0.25px">Громкость:</span>
<div class="vtrk" style="left:401px;top:158px;width:5px;height:74px"></div>
<div class="tk" style="left:389px;top:163px;width:4px;height:1px"></div>
<div class="tk" style="left:416px;top:163px;width:4px;height:1px"></div>
<div class="tk" style="left:389px;top:174px;width:4px;height:1px"></div>
<div class="tk" style="left:416px;top:174px;width:4px;height:1px"></div>
<div class="tk" style="left:389px;top:185px;width:4px;height:1px"></div>
<div class="tk" style="left:416px;top:185px;width:4px;height:1px"></div>
<div class="tk" style="left:389px;top:195px;width:4px;height:1px"></div>
<div class="tk" style="left:416px;top:195px;width:4px;height:1px"></div>
<div class="tk" style="left:389px;top:206px;width:4px;height:1px"></div>
<div class="tk" style="left:416px;top:206px;width:4px;height:1px"></div>
<div class="tk" style="left:389px;top:217px;width:4px;height:1px"></div>
<div class="tk" style="left:416px;top:217px;width:4px;height:1px"></div>
<div class="tk" style="left:389px;top:227px;width:4px;height:1px"></div>
<div class="tk" style="left:416px;top:227px;width:4px;height:1px"></div>
<div class="vth dis" style="left:394px;top:174px;width:21px;height:11px"><i></i></div>
<div class="chk" style="left:359px;top:244px"><i></i></div>
<span class="t" style="left:377px;top:244px;letter-spacing:0.2px">Выкл.</span>
<span class="t" style="left:464px;top:53px;letter-spacing:-0.05px">Стерео микшер</span>
<span class="t" style="left:464px;top:83px;letter-spacing:-0.1px">Баланс:</span>
<svg class="spk" style="left:464px;top:101px;width:13px;height:17px" viewBox="0 0 13 17"><g shape-rendering="crispEdges"><path d="M2 2H5V15H2Z" fill="#fff"/><path d="M5 2L10 6H12V10H10L5 15Z" fill="#ecea60"/><path d="M10 6H12V9H10Z" fill="#f4f2a0"/><path d="M6 2H7V3H6ZM7 3H8V4H7ZM8 4H9V5H8ZM9 5H12V6H9Z" fill="#8e8c34"/><path d="M2 1H5V2H2ZM1 2H2V14H1ZM2 14H3V15H2ZM2 15H5V16H2ZM4 2H5V3H4ZM5 3H6V7H5ZM4 7H5V9H4ZM3 8H4V9H3ZM5 9H6V13H5ZM4 13H5V15H4Z" fill="#000"/><path d="M5 14H6V15H5ZM6 13H7V14H6ZM7 12H8V13H7ZM8 11H9V12H8ZM9 10H10V11H9ZM10 9H12V10H10Z" fill="#000"/></g></svg>
<svg class="spk" style="left:541px;top:101px;width:13px;height:17px" viewBox="0 0 13 17"><g transform="translate(13,0) scale(-1,1)"><g shape-rendering="crispEdges"><path d="M2 2H5V15H2Z" fill="#fff"/><path d="M5 2L10 6H12V10H10L5 15Z" fill="#ecea60"/><path d="M10 6H12V9H10Z" fill="#f4f2a0"/><path d="M6 2H7V3H6ZM7 3H8V4H7ZM8 4H9V5H8ZM9 5H12V6H9Z" fill="#8e8c34"/><path d="M2 1H5V2H2ZM1 2H2V14H1ZM2 14H3V15H2ZM2 15H5V16H2ZM4 2H5V3H4ZM5 3H6V7H5ZM4 7H5V9H4ZM3 8H4V9H3ZM5 9H6V13H5ZM4 13H5V15H4Z" fill="#000"/><path d="M5 14H6V15H5ZM6 13H7V14H6ZM7 12H8V13H7ZM8 11H9V12H8ZM9 10H10V11H9ZM10 9H12V10H10Z" fill="#000"/></g></g></svg>
<div class="trk" style="left:487px;top:106px;width:44px;height:5px"></div>
<svg style="left:504px;top:100px;width:11px;height:21px" viewBox="0 0 11 21"><path d="M0 0H11V15.2L5.5 20.7L0 15.2Z" fill="#fffff4"/><path d="M1 1H10V14.8L5.5 19.3L1 14.8Z" fill="url(#dth)"/><path d="M9.5 1V14.6L5.5 18.6" fill="none" stroke="#8c8c82" stroke-width="1"/><path d="M10.5 0V15.2L5.2 20.5" fill="none" stroke="#38382c" stroke-width="1.1"/></svg>
<div class="tk" style="left:492px;top:122px;width:1px;height:3px"></div>
<div class="tk" style="left:509px;top:122px;width:1px;height:3px"></div>
<div class="tk" style="left:525px;top:122px;width:1px;height:3px"></div>
<span class="t" style="left:464px;top:136px;letter-spacing:0.25px">Громкость:</span>
<div class="vtrk" style="left:506px;top:158px;width:5px;height:74px"></div>
<div class="tk" style="left:494px;top:163px;width:4px;height:1px"></div>
<div class="tk" style="left:521px;top:163px;width:4px;height:1px"></div>
<div class="tk" style="left:494px;top:174px;width:4px;height:1px"></div>
<div class="tk" style="left:521px;top:174px;width:4px;height:1px"></div>
<div class="tk" style="left:494px;top:185px;width:4px;height:1px"></div>
<div class="tk" style="left:521px;top:185px;width:4px;height:1px"></div>
<div class="tk" style="left:494px;top:195px;width:4px;height:1px"></div>
<div class="tk" style="left:521px;top:195px;width:4px;height:1px"></div>
<div class="tk" style="left:494px;top:206px;width:4px;height:1px"></div>
<div class="tk" style="left:521px;top:206px;width:4px;height:1px"></div>
<div class="tk" style="left:494px;top:217px;width:4px;height:1px"></div>
<div class="tk" style="left:521px;top:217px;width:4px;height:1px"></div>
<div class="tk" style="left:494px;top:227px;width:4px;height:1px"></div>
<div class="tk" style="left:521px;top:227px;width:4px;height:1px"></div>
<div class="vth dis" style="left:499px;top:174px;width:21px;height:11px"><i></i></div>
<div class="chk" style="left:464px;top:244px"><i></i></div>
<span class="t" style="left:482px;top:244px;letter-spacing:0.2px">Выкл.</span>
<div class="sb" style="left:3px;top:268px;width:555px;height:18px"></div>
<span class="t" style="left:3px;top:271px;letter-spacing:-0.04px">Realtek HD Audio Input</span>
</div>
<div id="tb">
<div class="hi"></div><div class="hi2"></div>
<div class="btn" style="left:2px;top:5px;width:51px;height:22px"><i></i>
<svg style="left:1px;top:-1px;width:16px;height:18px" viewBox="0 0 17 18" preserveAspectRatio="none"><path d="M3.2 3.6Q5.6 1.6 9 3.4L7.8 8.4Q5 7 2 8.6Z" fill="#e8582c"/><path d="M10 3.2Q12.6 4.6 15.8 2.4L14.4 9.6Q11.6 11.4 8.8 9.6Z" fill="#5cb830"/><path d="M1.8 9.6Q4.6 8 7.6 9.4L6.4 14.4Q3.6 13.2 0.6 14.8Z" fill="#4070e0"/><path d="M8.6 10.6Q11.4 12.4 14.2 10.6L13 15.4Q10.2 17.2 7.4 15.4Z" fill="#f4c020"/></svg>
<span class="t" style="left:18px;top:4px;font-weight:bold;letter-spacing:1px">Пуск</span>
</div>
<div class="btn" style="left:58px;top:5px;width:160px;height:22px"><i></i>
<svg style="left:3px;top:2px;width:16px;height:16px" viewBox="0 0 16 16"><rect width="16" height="16" fill="#b4b4b8"/><rect x="0" y="7" width="16" height="5" fill="#f4f4f4"/><path d="M1 4H6L7 7H9L10 4H15V7H11L10 9H6L5 7H1Z" fill="#501010"/><rect x="3" y="9" width="10" height="4" fill="#c83030"/><rect x="2" y="12" width="12" height="2" fill="#902020"/></svg>
<span class="t" style="left:22px;top:4px;letter-spacing:-0.5px;word-spacing:1px">iCar DS</span>
</div>
<div class="btnp" style="left:221px;top:5px;width:160px;height:22px"><i></i>
<svg style="left:4px;top:3px;width:13px;height:14px" viewBox="0 0 12 14" preserveAspectRatio="none"><rect width="12" height="14" fill="#a6a6de"/><rect x="1" y="1" width="5" height="12" fill="#9c9cd2"/><rect x="0" y="0" width="12" height="1" fill="#7c7cac"/><rect x="11" y="0" width="1" height="14" fill="#6c6c94"/><rect x="0" y="0" width="1" height="14" fill="#2a2a52"/><rect x="0" y="13" width="12" height="1" fill="#2a2a52"/><path d="M2.5 3H4M2.5 5H4M2.5 7H4M2.5 9H4M2.5 11H4" stroke="#e8e8ff" stroke-width="0.8" opacity="0.6"/><rect x="6.4" y="2" width="1.6" height="9.6" fill="#1a1a5a"/><rect x="5.4" y="3" width="4.2" height="2.6" fill="#1a1a5a"/><rect x="6.6" y="3.8" width="2.6" height="0.9" fill="#e4e4ff"/><path d="M8.6 7H10.2M8.6 8.8H10.2M8.6 10.6H10.2" stroke="#f4f4ff" stroke-width="0.9"/></svg>
<span class="t" style="left:24px;top:4px;font-weight:bold;letter-spacing:0.25px">Уровень записи</span>
</div>
<div style="left:543px;top:9px;width:12px;height:16px;background:#12265a;overflow:hidden"><span class="t" style="left:1px;top:2px;color:#fff;letter-spacing:-0.3px">RU</span></div>
<div class="sb" style="left:559px;top:5px;width:239px;height:24px"></div>
<svg style="left:563px;top:14px;width:10px;height:8px" viewBox="0 0 10 8"><path d="M4.6 0.8L1.4 4L4.6 7.2M8.8 0.8L5.6 4L8.8 7.2" fill="none" stroke="#000" stroke-width="1.5"/></svg>
<svg style="left:577px;top:8px;width:16px;height:16px" viewBox="0 0 16 16"><rect y="3" width="16" height="12" fill="#e82c18"/><text x="8" y="12.5" font-family="Liberation Sans, sans-serif" font-weight="bold" font-style="italic" font-size="9" fill="#fff" text-anchor="middle">ATI</text></svg>
<svg style="left:594px;top:5px;width:56px;height:22px" viewBox="0 0 800 314"><path d="M150 170L240 190L235 270L170 260Z" fill="#b8b8e0" opacity="0.85"/><circle cx="105" cy="155" r="87" fill="#4c4c5c"/><circle cx="105" cy="155" r="66" fill="#9090a0"/><circle cx="98" cy="145" r="42" fill="#5c5880"/><path d="M40 120Q60 80 110 78" stroke="#e8e8f4" stroke-width="18" fill="none"/><circle cx="120" cy="180" r="22" fill="#c8c8d0"/><path d="M310 150L440 130L470 210L360 262L318 215Z" fill="#484850"/><path d="M340 180L440 160L452 200L366 236Z" fill="#a0a0b4"/><path d="M300 62L330 80L390 68L412 96L400 150L350 172L290 130Z" fill="#2cac2c"/><path d="M320 90L380 80L392 110L350 140Z" fill="#70e060"/><rect x="530" y="62" width="214" height="198" fill="#fafafc"/><path d="M535 258H748V75" stroke="#9c9c90" stroke-width="10" fill="none"/><path d="M545 160Q560 215 640 218Q670 215 660 190Q700 185 730 160L690 130L680 155Q640 175 590 165Q560 150 575 130Q550 140 545 160Z" fill="#1420a0"/></svg>
<svg style="left:646px;top:5px;width:56px;height:22px" viewBox="0 0 800 314"><circle cx="157" cy="167" r="113" fill="#d8b01c"/><circle cx="150" cy="160" r="92" fill="#e4bc20"/><path d="M115 95Q130 150 155 165Q180 150 195 95M120 245Q120 185 155 170Q190 185 190 245" stroke="#fff4c0" stroke-width="24" fill="none"/><circle cx="415" cy="170" r="112" fill="#1c2434"/><path d="M315 150Q310 200 350 240" stroke="#3848b0" stroke-width="22" fill="none"/><path d="M340 230Q415 280 490 230" stroke="#5470b0" stroke-width="20" fill="none"/><path d="M415 95L495 195H335Z" fill="none" stroke="#d0d4e0" stroke-width="24" stroke-linejoin="round"/><path d="M580 130H625L690 75V265L625 215H580Z" fill="#e06448" stroke="#201008" stroke-width="16" stroke-linejoin="round"/><path d="M640 130L680 100V240L640 210Z" fill="#f09078"/><path d="M725 100Q745 170 725 245M762 80Q790 170 762 265" stroke="#181008" stroke-width="16" fill="none"/></svg>
<svg style="left:700px;top:5px;width:56px;height:22px" viewBox="0 0 800 314"><rect x="62" y="60" width="205" height="175" fill="#f4f0f0"/><path d="M85 80H262V215H85Z" fill="#100c10"/><path d="M85 215L215 62L262 62L140 215Z" fill="#f0c020"/><path d="M100 215L225 62L240 62L115 215Z" fill="#e84020"/><path d="M150 215L262 90V125L185 215Z" fill="#2840b0"/><path d="M190 215L262 130V160L215 215Z" fill="#40b0a0"/><path d="M225 215L262 170V215Z" fill="#e8c8e0"/><rect x="60" y="236" width="205" height="16" fill="#080808"/><rect x="110" y="262" width="110" height="12" fill="#505048"/><path d="M322 70Q322 58 336 58L470 64Q492 66 498 84L505 250Q505 276 480 280L350 262Q326 258 324 236Z" fill="#2484ec"/><path d="M470 64Q492 66 498 84L505 250Q505 276 480 280Z" fill="#1458c8"/><ellipse cx="405" cy="165" rx="68" ry="76" fill="#f0f6fe"/><path d="M350 165L388 138V155H425V138L462 165L425 192V175H388V192Z" fill="#1c6ce0"/><rect x="560" y="56" width="225" height="226" fill="#0c6c14"/><rect x="590" y="88" width="66" height="54" fill="#b8f0b8"/><rect x="590" y="188" width="66" height="62" fill="#d0f8d0"/><rect x="680" y="84" width="56" height="30" fill="#90e898"/><rect x="684" y="128" width="48" height="30" fill="#c8f4c8"/><rect x="684" y="186" width="48" height="30" fill="#c8f4c8"/><rect x="656" y="236" width="90" height="22" fill="#70d878"/><path d="M656 115H680M656 215H684M745 100V250" stroke="#48c058" stroke-width="10" fill="none"/></svg>
<span class="t" style="left:762px;top:11px;letter-spacing:0.1px">16:05</span>
</div>
</div>
</body>
</html>
